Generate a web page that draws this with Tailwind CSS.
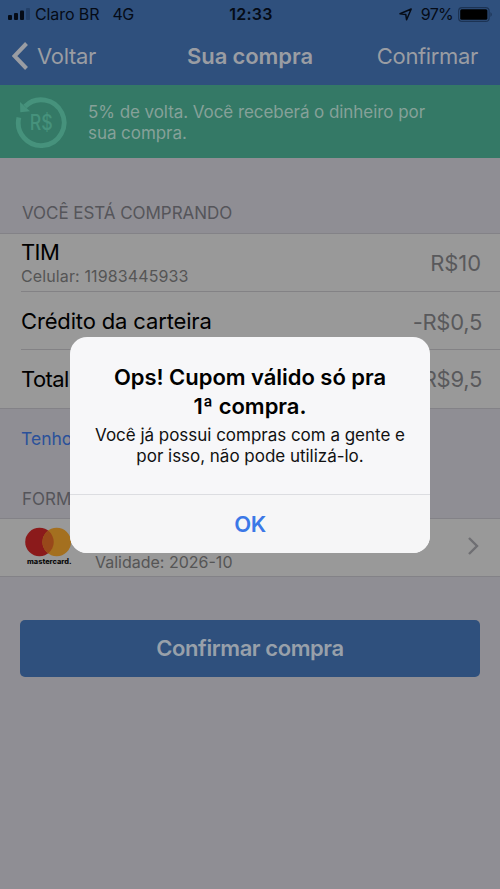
<!DOCTYPE html>
<html lang="pt-BR">
<head>
<meta charset="utf-8">
<title>Sua compra</title>
<script src="https://cdn.jsdelivr.net/npm/@tailwindcss/browser@4"></script>
</head>
<body class="bg-[#8f8e94]">
<div class="relative w-[500px] h-[889px] overflow-hidden bg-[#8f8e94] font-['Inter','Liberation_Sans',sans-serif] whitespace-nowrap">
  <header class="h-[85px] bg-[#2f507d]">
    <div class="h-7 grid grid-cols-3 items-center pl-2 pr-[7px] text-[16px] leading-7 text-[#050b16]">
      <div class="flex items-center">
        <svg class="w-[22px] h-[12px] mr-[5px]" viewBox="0 0 22 12"><rect x="0" y="7" width="4" height="5" rx="1" fill="#050b16"/><rect x="6" y="5" width="4" height="7" rx="1" fill="#050b16"/><rect x="12" y="2.5" width="4" height="9.500" rx="1" fill="#050b16"/><rect x="18" y="0" width="4" height="12" rx="1" fill="#234069"/></svg>
        <span class="tracking-[-0.1px]">Claro BR</span>
        <span class="ml-[13px] tracking-[-0.5px]">4G</span>
      </div>
      <div class="text-center font-semibold tracking-[0.25px] pl-px">12:33</div>
      <div class="flex items-center justify-end">
        <svg class="w-[13px] h-[13px] mr-[9px]" viewBox="0 0 13 13"><path d="M12.200 1 L7.600 11.800 L6.800 6.600 L1 5.800 Z" fill="none" stroke="#050b16" stroke-width="1.500" stroke-linejoin="round"/></svg>
        <span class="tracking-[-0.7px]">97%</span>
        <svg class="w-[35px] h-[15px] ml-[5px]" viewBox="0 0 35 15"><rect x=".6" y=".6" width="30.500" height="13.800" rx="3.500" fill="none" stroke="#1c3354" stroke-width="1.200"/><rect x="2.200" y="2.300" width="27.200" height="10.400" rx="1.500" fill="#000"/><path d="M32.500 5 Q35 7.500 32.500 10Z" fill="#1c3354"/></svg>
      </div>
    </div>
    <div class="h-14 grid grid-cols-3 items-center pl-3 pr-[22px] text-[22px] text-[#9a9da3]">
      <div class="flex items-center">
        <svg class="w-4 h-7 mr-[9px]" viewBox="0 0 16 28"><path d="M14.500 1.500 L2.500 14 L14.500 26.500" fill="none" stroke="#9a9da3" stroke-width="4"/></svg>
        <span class="tracking-[-0.3px]">Voltar</span>
      </div>
      <div class="text-center font-semibold -mr-[10px] tracking-[-0.1px]">Sua compra</div>
      <div class="text-right tracking-[-0.35px]">Confirmar</div>
    </div>
  </header>

  <section class="h-[73px] bg-[#347966] flex items-center pl-[14px]">
    <svg class="w-[54px] h-[54px] mr-5" viewBox="14 94.500 54 54">
      <path d="M25 106 A22.900 22.900 0 1 1 18.900 117" fill="none" stroke="#46927c" stroke-width="4.800"/>
      <path d="M20 101.500 L20.300 111.700 L30 110.800Z" fill="#46927c"/>
      <text x="29.800" y="129.700" font-family="Inter" font-size="21.500" font-weight="500" fill="#46927c" textLength="23" lengthAdjust="spacingAndGlyphs">R$</text>
    </svg>
    <p class="text-[17px] leading-[21px] text-[#86a199] pt-[2px] tracking-[-0.06px]">5% de volta. Você receberá o dinheiro por<br>sua compra.</p>
  </section>

  <h2 class="h-[75px] pt-[45px] pl-[22px] text-[17px] leading-[21px] text-[#55555a] tracking-[-0.05px]">VOCÊ ESTÁ COMPRANDO</h2>
  <section class="h-[176px] bg-[#999999] border-y border-[#838287]">
    <div class="ml-[21px] h-[58px] border-b border-[#838285] flex items-center justify-between pr-[19px]">
      <div class="pt-[3px]">
        <div class="text-[22px] leading-6 text-black tracking-[-0.6px]">TIM</div>
        <div class="text-[16px] leading-6 text-[#555] tracking-[0.12px]">Celular: 11983445933</div>
      </div>
      <div class="text-[22px] text-[#59595c] tracking-[-0.1px] pt-0.5">R$10</div>
    </div>
    <div class="ml-[21px] h-[58px] border-b border-[#838285] flex items-center justify-between pr-[18px] text-[22px]">
      <span class="tracking-[-0.15px] pt-px">Crédito da carteira</span><span class="text-[#59595c] tracking-[-0.3px] pt-[3px]">-R$0,5</span>
    </div>
    <div class="ml-[21px] h-[58px] flex items-center justify-between pr-[18px] text-[22px]">
      <span class="tracking-[-0.6px]">Total</span><span class="text-[#59595c] tracking-[-0.3px]">R$9,5</span>
    </div>
  </section>
  <a class="block h-[58px] pl-[21px] text-[17.500px] leading-[59px] text-[#2b519a]">Tenho</a>
  <h2 class="h-[51px] pt-[22px] pl-[22px] text-[17px] leading-[21px] text-[#55555a]">FORMA</h2>
  <section class="h-[59px] bg-[#999999] border-y border-[#838287] flex items-center justify-between pl-[25px] pr-[21px]">
    <div class="flex h-full">
      <svg class="w-12 h-[40px] mt-[7px] mr-[22px]" viewBox="25 526 48 40">
        <circle cx="39.500" cy="542" r="14.300" fill="#8b1a1b"/><circle cx="56.700" cy="542" r="14.300" fill="#a4701f"/>
        <path d="M48.100 530.600 A14.300 14.300 0 0 1 48.100 553.400 A14.300 14.300 0 0 1 48.100 530.600Z" fill="#98481a"/>
        <text x="27" y="563.500" font-family="Inter" font-size="7" font-weight="800" fill="#0a0a0a" textLength="44.500" lengthAdjust="spacingAndGlyphs">mastercard.</text>
      </svg>
      <div class="pt-[31px] text-[16px] leading-6 text-[#555]">Validade: 2026-10</div>
    </div>
    <svg class="w-3 h-5 mb-[3px]" viewBox="0 0 12 20"><path d="M2 2 L10 10 L2 18" fill="none" stroke="#6f6f73" stroke-width="2.400"/></svg>
  </section>
  <button class="block w-[460px] h-[57px] mt-[43px] ml-5 rounded-[5px] bg-[#2f507d] text-[22px] font-semibold text-[#98a0aa] tracking-[-0.42px]">Confirmar compra</button>

  <div class="absolute left-[70px] top-[337px] w-[360px] h-[216px] rounded-[17px] bg-[#f7f7f9] overflow-hidden text-center text-black">
    <div class="h-[157px] pt-[26px]">
      <div class="text-[22px] leading-[29px] font-semibold tracking-[-0.03px]">Ops! Cupom válido só pra<br>1ª compra.</div>
      <div class="text-[17px] leading-[21px] pt-[4px] text-[#111] tracking-[-0.02px]">Você já possui compras com a gente e<br>por isso, não pode utilizá-lo.</div>
    </div>
    <div class="h-[59px] border-t border-[#dcdde1] bg-[#f6f6f7] text-[22px] leading-[58px] font-semibold text-[#3b78e7] tracking-[-0.4px]">OK</div>
  </div>
</div>
</body>
</html>
